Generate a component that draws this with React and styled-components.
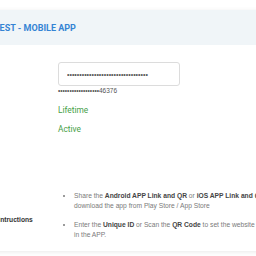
import styled, { createGlobalStyle } from "styled-components";

const Global = createGlobalStyle`
    html, body {
        margin: 0;
        padding: 0;
        background: #ffffff;
        overflow: hidden;
    }
`
const Page = styled.div`
    padding-top: 10px;
    width: 256px;
    height: 256px;
    overflow: hidden;
`
const Card = styled.div`
    margin-left: -68px;
    width: 560px;
    background: #ffffff;
    box-shadow: 0 1px 5px rgba(0,0,0,.09);
`
const Header = styled.div`
    height: 35px;
    padding-left: 7px;
    display: flex;
    align-items: center;
    background: #f0f5f8;
`
const Title = styled.h2`
    margin: 0;
    font-family: Roboto, "Liberation Sans", sans-serif;
    font-weight: 700;
    font-size: 9px;
    color: #3584d4;
    white-space: nowrap;
`
const Body = styled.div`
    padding: 17px 0 11px 31px;
    display: grid;
    grid-template-columns: 95px 1fr;
    row-gap: 7px;
`
const Label = styled.div`
    font-family: "Liberation Sans", Arial, sans-serif;
    font-weight: 700;
    font-size: 6.7px;
    line-height: 10px;
    color: #333333;
    white-space: nowrap;
    margin-top: ${props => props.offset || 0}px;
`
const Value = styled.div`
    display: flex;
    flex-direction: column;
    margin-top: ${props => props.offset || 0}px;
`
const Input = styled.input`
    box-sizing: border-box;
    width: 122px;
    height: 24px;
    padding: 0 8px;
    border: 1px solid #dcdcdc;
    border-radius: 3px;
    font-family: "Liberation Sans", Arial, sans-serif;
    font-size: 7px;
    color: #555555;
    outline: none;
`
const Masked = styled.div`
    margin-top: 1px;
    margin-bottom: 2px;
    font-family: "Liberation Sans", Arial, sans-serif;
    font-size: 6.5px;
    line-height: 8px;
    color: #555555;
`
const Green = styled.div`
    font-family: Roboto, "Liberation Sans", sans-serif;
    font-size: 8.3px;
    line-height: 12px;
    color: #47a047;
`
const List = styled.ul`
    margin: 0;
    padding-left: 16px;
    font-family: "Liberation Sans", Arial, sans-serif;
    font-size: 6.7px;
    line-height: 10px;
    color: #7a7a7a;
    white-space: nowrap;
`
const Item = styled.li`
    & + & {
        margin-top: 9px;
    }
    b {
        color: #444444;
    }
`

const App = () => {
    return (
        <Page>
            <Global />
            <Card>
                <Header>
                    <Title>LICENSE REQUEST - MOBILE APP</Title>
                </Header>
                <Body>
                    <Label>Unique ID</Label>
                    <Value>
                        <Input type="password" defaultValue={"x".repeat(33)} readOnly />
                        <Masked>{"\u2022".repeat(18)}46376</Masked>
                    </Value>

                    <Label>Validity</Label>
                    <Value>
                        <Green>Lifetime</Green>
                    </Value>

                    <Label>Status</Label>
                    <Value>
                        <Green>Active</Green>
                    </Value>

                    <Label offset={73}>App Setup Intructions</Label>
                    <Value offset={49}>
                        <List>
                            <Item>
                                Share the <b>Android APP Link and QR</b> or <b>iOS APP Link and QR</b> with the user to<br />
                                download the app from Play Store / App Store
                            </Item>
                            <Item>
                                Enter the <b>Unique ID</b> or Scan the <b>QR Code</b> to set the website license<br />
                                in the APP.
                            </Item>
                        </List>
                    </Value>
                </Body>
            </Card>
        </Page>
    )
}

export default App
